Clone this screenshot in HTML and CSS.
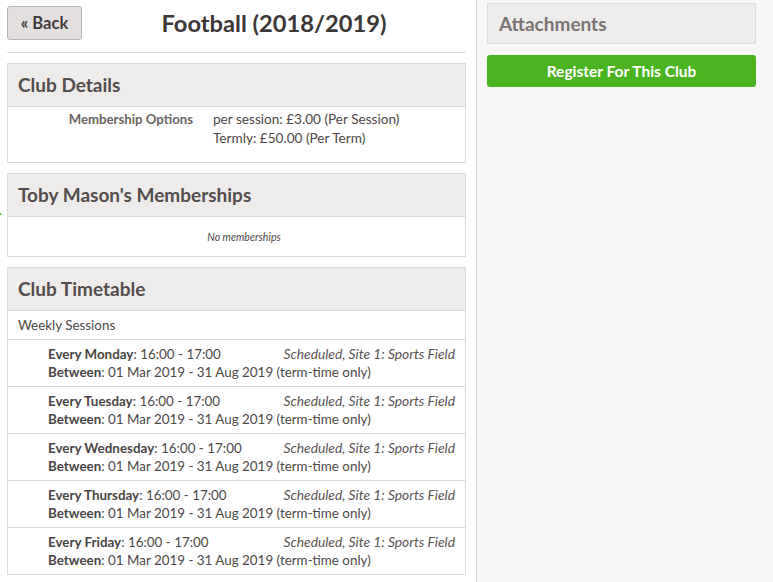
FILE: index.html
```html
<!DOCTYPE html>
<html>
<head>
<meta charset="utf-8">
<link rel="stylesheet" href="styles.css">
</head>
<body>
<div class="page">
  <span class="edge-mark"></span>
  <main class="main">
    <div class="topbar">
      <button class="back">« Back</button>
      <h1 class="title">Football (2018/2019)</h1>
    </div>
    <hr class="rule">
    <section class="panel">
      <h2 class="panel-head">Club Details</h2>
      <div class="details">
        <div class="label">Membership Options</div>
        <div class="value">per session: £3.00 (Per Session)<br>Termly: £50.00 (Per Term)</div>
      </div>
    </section>
    <section class="panel">
      <h2 class="panel-head">Toby Mason's Memberships</h2>
      <div class="empty">No memberships</div>
    </section>
    <section class="panel">
      <h2 class="panel-head">Club Timetable</h2>
      <div class="weekly">Weekly Sessions</div>
      <div class="session">
        <div class="line"><span><b>Every Monday</b>: 16:00 - 17:00</span><i>Scheduled, Site 1: Sports Field</i></div>
        <div class="line"><span><b>Between</b>: 01 Mar 2019 - 31 Aug 2019 (term-time only)</span></div>
      </div>
      <div class="session">
        <div class="line"><span><b>Every Tuesday</b>: 16:00 - 17:00</span><i>Scheduled, Site 1: Sports Field</i></div>
        <div class="line"><span><b>Between</b>: 01 Mar 2019 - 31 Aug 2019 (term-time only)</span></div>
      </div>
      <div class="session">
        <div class="line"><span><b>Every Wednesday</b>: 16:00 - 17:00</span><i>Scheduled, Site 1: Sports Field</i></div>
        <div class="line"><span><b>Between</b>: 01 Mar 2019 - 31 Aug 2019 (term-time only)</span></div>
      </div>
      <div class="session">
        <div class="line"><span><b>Every Thursday</b>: 16:00 - 17:00</span><i>Scheduled, Site 1: Sports Field</i></div>
        <div class="line"><span><b>Between</b>: 01 Mar 2019 - 31 Aug 2019 (term-time only)</span></div>
      </div>
      <div class="session">
        <div class="line"><span><b>Every Friday</b>: 16:00 - 17:00</span><i>Scheduled, Site 1: Sports Field</i></div>
        <div class="line"><span><b>Between</b>: 01 Mar 2019 - 31 Aug 2019 (term-time only)</span></div>
      </div>
    </section>
  </main>
  <aside class="side">
    <div class="attach">Attachments</div>
    <button class="register">Register For This Club</button>
  </aside>
</div>
</body>
</html>
```

FILE: styles.css
```css
* { box-sizing: border-box; }
html, body { margin: 0; padding: 0; background: #fff; }
body {
  font-family: "Lato", "Liberation Sans", sans-serif;
  color: #4d4847;
  font-size: 13.4px;
}
.page {
  position: relative;
  display: flex;
  width: 773px;
  min-height: 582px;
}
.edge-mark {
  position: absolute;
  left: -3px;
  top: 211px;
  width: 0;
  height: 0;
  border-top: 3px solid transparent;
  border-bottom: 3px solid transparent;
  border-left: 5px solid #59b82f;
}
.main {
  width: 476px;
  padding: 6px 10px 7px 7px;
}
.topbar {
  display: flex;
  align-items: center;
  height: 34px;
}
.back {
  width: 75px;
  height: 34px;
  border: 1px solid #b8b2b2;
  border-radius: 3px;
  background: #e3dfdf;
  color: #3f3a39;
  font-family: "Lato", "Liberation Sans", sans-serif;
  font-size: 16.5px;
  font-weight: 700;
  padding: 0;
}
.title {
  flex: 1;
  margin: 0;
  text-align: center;
  font-size: 23.7px;
  font-weight: 700;
  color: #3b3736;
}
.rule {
  border: 0;
  border-top: 1px solid #dedbdb;
  margin: 12px 0 10px;
}
.panel {
  border: 1px solid #dcdada;
  margin-bottom: 10px;
}
.panel-head {
  margin: 0;
  height: 43px;
  line-height: 42px;
  padding-left: 10px;
  background: #eeeceb;
  border-bottom: 1px solid #dcdada;
  font-size: 19px;
  font-weight: 700;
  color: #534d4c;
}
.details {
  display: flex;
  padding: 3px 0 14px;
  line-height: 19px;
}
.label {
  width: 185px;
  text-align: right;
  font-weight: 700;
  color: #6b6564;
  font-size: 13.2px;
}
.value {
  padding-left: 20px;
  font-size: 13.6px;
}
.empty {
  text-align: center;
  font-style: italic;
  font-size: 10.6px;
  height: 39px;
  line-height: 40px;
  padding-left: 15px;
}
.weekly {
  height: 29px;
  line-height: 29px;
  padding-left: 10px;
  border-bottom: 1px solid #dcdada;
}
.session {
  padding: 4px 10px 4px 40px;
  border-bottom: 1px solid #dcdada;
  line-height: 19px;
}
.session:last-child { border-bottom: 0; }
.line {
  display: flex;
  justify-content: space-between;
  align-items: baseline;
  height: 19px;
}
.line b { font-weight: 700; color: #4a4544; }
.line i { color: #5a5453; font-size: 13.8px; }
.side {
  flex: 1;
  background: #f7f7f7;
  border-left: 1px solid #e1dcdc;
  padding: 3px 17px 0 10px;
}
.attach {
  height: 41px;
  line-height: 40px;
  border: 1px solid #dcdada;
  background: #eeeceb;
  padding-left: 11px;
  font-size: 19px;
  font-weight: 700;
  color: #7a7473;
}
.register {
  display: block;
  width: 100%;
  height: 32px;
  margin-top: 11px;
  border: 0;
  border-radius: 3px;
  background: #4bb421;
  color: #fff;
  font-family: "Lato", "Liberation Sans", sans-serif;
  font-size: 15.5px;
  font-weight: 700;
}
```
